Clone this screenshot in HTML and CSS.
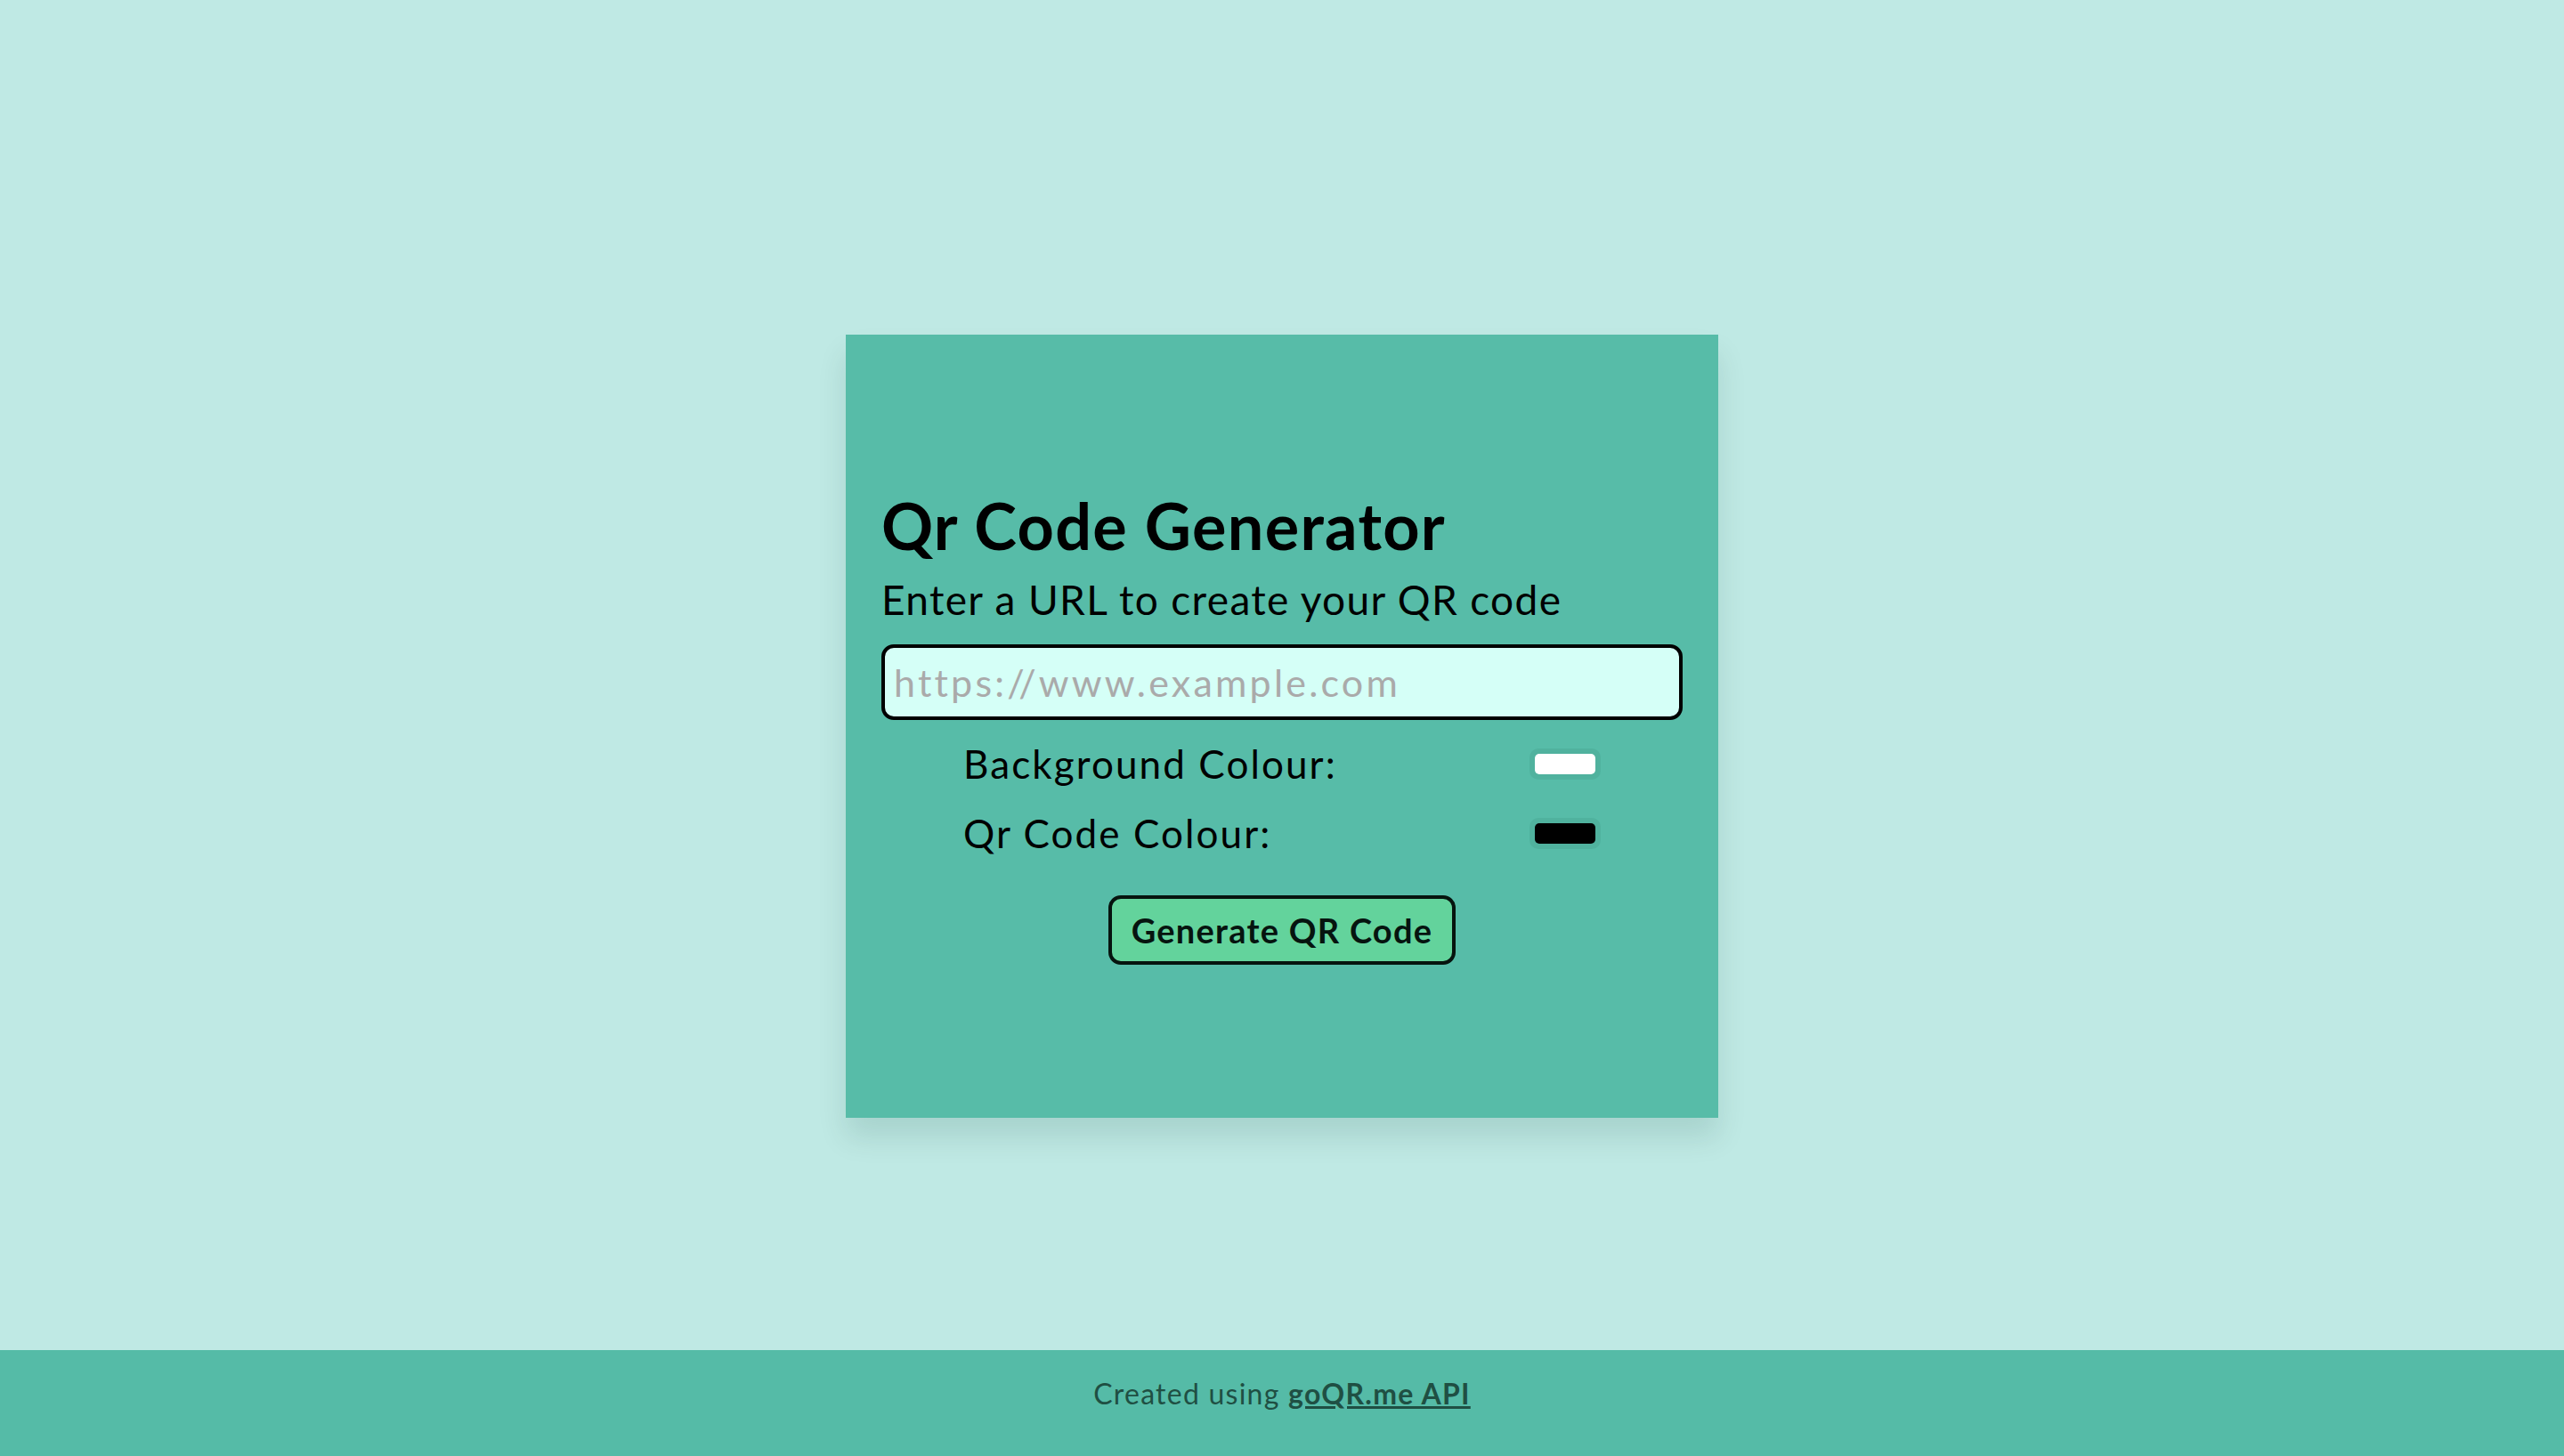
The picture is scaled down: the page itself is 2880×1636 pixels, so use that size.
FILE: index.html
```html
<!DOCTYPE html>
<html lang="en">
<head>
<meta charset="utf-8">
<title>Qr Code Generator</title>
<link rel="stylesheet" href="styles.css">
</head>
<body>
<main class="page">
  <section class="card">
    <h1 class="title">Qr Code Generator</h1>
    <p class="subtitle">Enter a URL to create your QR code</p>
    <input class="url-input" type="text" placeholder="https://www.example.com">
    <div class="colour-rows">
      <div class="colour-row">
        <label class="colour-label" for="bg">Background Colour:</label>
        <input class="swatch" id="bg" type="color" value="#ffffff">
      </div>
      <div class="colour-row">
        <label class="colour-label" for="fg">Qr Code Colour:</label>
        <input class="swatch" id="fg" type="color" value="#000000">
      </div>
    </div>
    <button class="generate" type="button">Generate QR Code</button>
  </section>
</main>
<footer class="footer">
  <p class="footer-text">Created using <a class="footer-link" href="#">goQR.me API</a></p>
</footer>
</body>
</html>
```
FILE: styles.css
```css
* { box-sizing: border-box; }
html, body { margin: 0; padding: 0; }
body {
  background: #bfe9e4;
  font-family: Lato, "Open Sans", sans-serif;
  color: #000;
}
.page {
  height: 100vh;
  padding-bottom: 4px;
  display: flex;
  align-items: center;
  justify-content: center;
}
.card {
  width: 980px;
  height: 880px;
  background: #57bca8;
  padding: 174px 40px 171px;
  display: flex;
  flex-direction: column;
  box-shadow: 0 22px 30px rgba(0, 60, 50, 0.12);
}
.title {
  margin: 0;
  font-size: 72px;
  line-height: 80px;
  font-weight: 700;
  letter-spacing: 1.3px;
}
.subtitle {
  margin: 16px 0 0;
  font-size: 46px;
  line-height: 56px;
  font-weight: 400;
  letter-spacing: 1.35px;
}
.url-input {
  margin-top: 22px;
  width: 900px;
  height: 85px;
  border: 4px solid #000;
  border-radius: 14px;
  background: #d5fff7;
  padding: 0 10px;
  font-family: inherit;
  font-size: 43px;
  letter-spacing: 3.2px;
  color: #000;
  outline: none;
}
.url-input::placeholder { color: #aaaaaa; }
.colour-rows {
  margin-top: 21px;
  display: flex;
  flex-direction: column;
  gap: 22px;
  align-items: center;
}
.colour-row {
  width: 716px;
  height: 56px;
  display: flex;
  align-items: center;
  justify-content: space-between;
}
.colour-label {
  font-size: 44px;
  line-height: 56px;
  letter-spacing: 2.1px;
}
.swatch {
  -webkit-appearance: none;
  appearance: none;
  width: 80px;
  height: 35px;
  padding: 6px;
  border: none;
  border-radius: 10px;
  background: #50b29e;
  cursor: pointer;
}
.swatch::-webkit-color-swatch-wrapper { padding: 0; }
.swatch::-webkit-color-swatch { border: none; border-radius: 5px; }
.generate {
  margin: 42px auto 0;
  width: 390px;
  height: 78px;
  background: #63d39c;
  border: 4px solid #06140f;
  border-radius: 14px;
  font-family: inherit;
  font-size: 38px;
  font-weight: 700;
  letter-spacing: 1.25px;
  color: #06140f;
  padding: 0;
}
.footer {
  position: fixed;
  left: 0;
  right: 0;
  bottom: 0;
  height: 119px;
  background: #55bba7;
  padding-top: 29px;
}
.footer-text {
  margin: 0;
  text-align: center;
  font-size: 32px;
  line-height: 40px;
  letter-spacing: 1.25px;
  color: #1f4f43;
}
.footer-link {
  color: #1f4f43;
  font-weight: 700;
  text-decoration: underline;
}
```
